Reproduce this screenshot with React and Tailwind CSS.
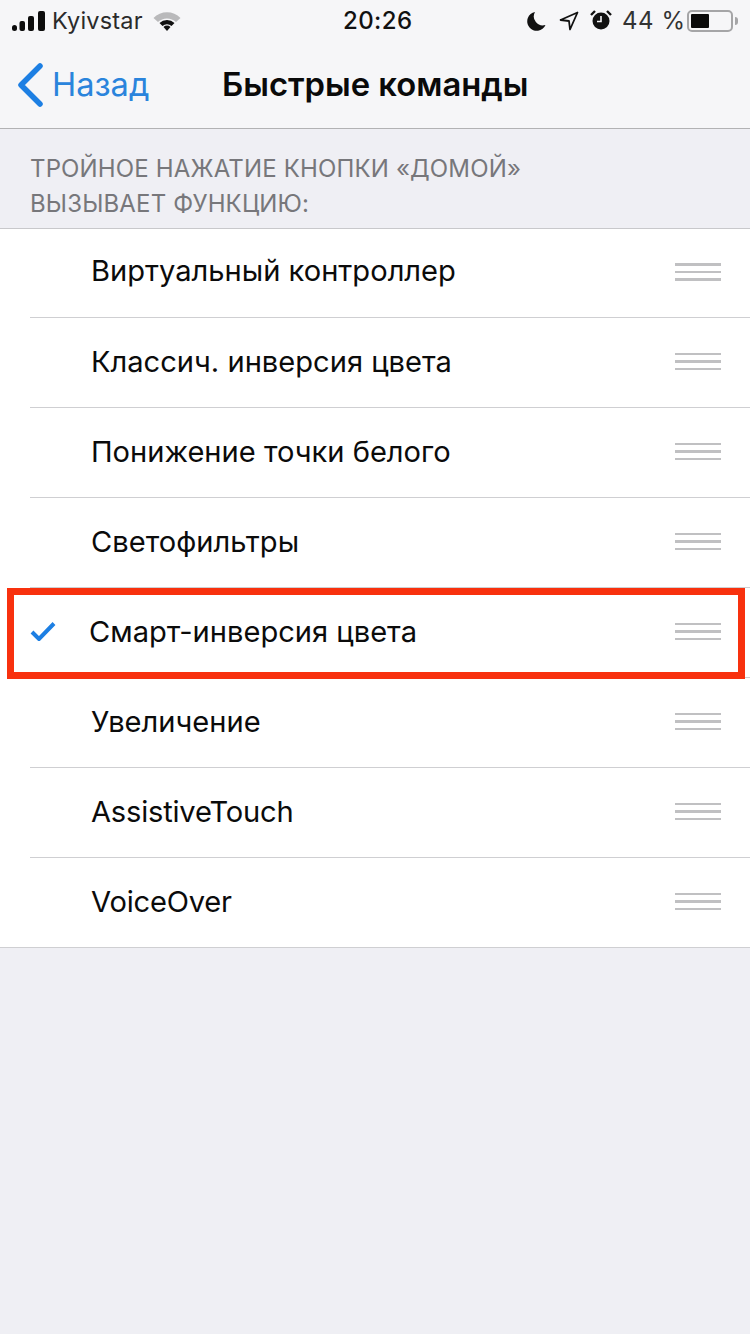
import React from "react";

const font = { fontFamily: "Inter, 'Noto Sans', sans-serif" };

function Grip() {
  return (
    <div className="flex flex-col gap-[5px] w-[46px] shrink-0 blur-[0.7px]">
      <div className="h-[2.5px] bg-[#c0c0c2]" />
      <div className="h-[2.5px] bg-[#c0c0c2]" />
      <div className="h-[2.5px] bg-[#c0c0c2]" />
    </div>
  );
}

function Check() {
  return (
    <svg width="26" height="20" viewBox="0 0 26 20" className="shrink-0 mb-[3px]">
      <path d="M2 11 L9 18 L24 2.5" fill="none" stroke="#1d7fe3" strokeWidth="4" />
    </svg>
  );
}

function Row({ label, checked, first, last, latin }) {
  return (
    <div className={`h-[90px] flex flex-col ${first ? "border-t border-[#c8c8cb]" : ""}`}>
      <div className={`flex-1 flex items-center ${checked ? "pl-[30px] gap-[33px]" : "pl-[91px]"} pr-[29px]`}>
        {checked && <Check />}
        <div className={`${latin ? "tracking-[-0.2px]" : ""} ${first ? "pb-[4px]" : "pb-[2px]"} flex-1 text-[29.1px] leading-none text-[#0b0b0b]`}>
          {label}
        </div>
        <div className="pb-[2px]"><Grip /></div>
      </div>
      <div className={`h-px bg-[#cfcfd2] ${last ? "" : "ml-[30px]"}`} />
    </div>
  );
}

function StatusBar() {
  return (
    <div className="h-[41px] flex items-center pl-[12px] text-[#111]">
      <div className="w-[331px] flex items-center gap-[7px]">
        <svg width="33" height="20" viewBox="0 0 33 20" fill="#0c0c0c">
          <rect x="0" y="14" width="5" height="6" rx="2.5" />
          <rect x="7.5" y="10" width="5.5" height="10" rx="2" />
          <rect x="16" y="5" width="6" height="15" rx="2" />
          <rect x="26" y="0" width="7" height="20" rx="2" />
        </svg>
        <span className="text-[23.5px] tracking-[0.2px] text-[#2a2a2a] w-[89px]">Kyivstar</span>
        <svg width="28" height="20" viewBox="0 0 28 20" className="ml-[5px]">
          <path d="M0.5 7 A19 19 0 0 1 27.5 7 L23 11 A13 13 0 0 0 5 11 Z" fill="#b9b9bb" />
          <path d="M6.5 12 A11 11 0 0 1 21.5 12 L18.5 15 A7 7 0 0 0 9.5 15 Z" fill="#111" />
          <path d="M10.5 16 A5 5 0 0 1 17.5 16 L14 20 Z" fill="#111" />
        </svg>
      </div>
      <span className="w-[184px] text-[24px] font-medium tracking-[0.4px] text-[#111]">20:26</span>
      <div className="flex items-center">
        <svg width="20" height="20" viewBox="0 0 20 20">
          <path d="M8 1 A9.5 9.5 0 1 0 18.5 14 A9 9 0 0 1 8 1 Z" fill="#111" />
        </svg>
        <svg width="20" height="20" viewBox="0 0 20 20" className="ml-[12px]">
          <path d="M18.5 1.5 L1.5 9 L10 10 L11 18.5 Z" fill="none" stroke="#111" strokeWidth="1.8" strokeLinejoin="round" />
        </svg>
        <svg width="22" height="22" viewBox="0 0 22 22" className="ml-[11px] mb-[2px]">
          <circle cx="11" cy="12" r="8.5" fill="#111" />
          <path d="M11 7 V12.5 H7" fill="none" stroke="#f6f6f8" strokeWidth="1.6" />
          <path d="M1 6 L5 2 M21 6 L17 2" stroke="#111" strokeWidth="2.4" />
        </svg>
        <span className="ml-[10px] w-[65px] text-[24px] tracking-[0.6px] text-[#333] whitespace-nowrap">44 %</span>
        <div className="w-[46px] h-[22px] rounded-[5px] border-2 border-[#a5a5a7] p-[2px]">
          <div className="h-full w-[18px] bg-[#0a0a0a] rounded-[1px]" />
        </div>
        <div className="ml-[2px] w-[3px] h-[8px] bg-[#a5a5a7] rounded-r-sm" />
      </div>
    </div>
  );
}

const items = [
  "Виртуальный контроллер",
  "Классич. инверсия цвета",
  "Понижение точки белого",
  "Светофильтры",
  "Смарт-инверсия цвета",
  "Увеличение",
  "AssistiveTouch",
  "VoiceOver",
];

export default function App() {
  return (
    <div style={font} className="relative w-[750px] h-[1334px] overflow-hidden bg-[#efeff4]">
      <div className="h-[129px] bg-[#f6f6f8] border-b border-[#b2b2b4] flex flex-col">
        <StatusBar />
        <div className="flex-1 flex items-center pl-[17px]">
          <svg width="28" height="44" viewBox="0 0 28 44">
            <path d="M23 3 L4 22 L23 41" fill="none" stroke="#1d7fe3" strokeWidth="5.5" strokeLinecap="round" strokeLinejoin="round" />
          </svg>
          <span className="ml-[7px] w-[170px] text-[32.6px] leading-none text-[#2a84dc]">Назад</span>
          <span className="text-[32.8px] leading-none font-semibold text-[#0a0a0a] whitespace-nowrap">Быстрые команды</span>
        </div>
      </div>

      <div className="h-[99px] pl-[30px] pt-[22px] text-[24px] leading-[35px] tracking-[0.15px] text-[#77777b]">
        <div>ТРОЙНОЕ НАЖАТИЕ КНОПКИ «ДОМОЙ»</div>
        <div>ВЫЗЫВАЕТ ФУНКЦИЮ:</div>
      </div>

      <div className="bg-white">
        {items.map((t, i) => (
          <Row key={t} label={t} checked={i === 4} first={i === 0} last={i === items.length - 1} latin={i >= 6} />
        ))}
      </div>

      <div className="absolute left-[7px] top-[588px] w-[738px] h-[91px] border-[7px] border-[#f8310e]" />
    </div>
  );
}
